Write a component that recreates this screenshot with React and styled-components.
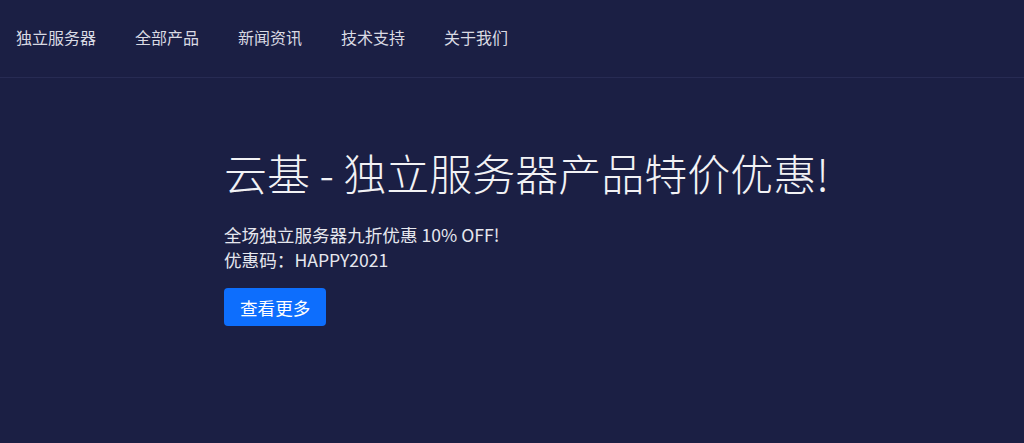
import styled, { createGlobalStyle } from 'styled-components';

const GlobalStyle = createGlobalStyle`
  html, body {
    margin: 0;
    padding: 0;
    background: #1b1f44;
  }
  body {
    font-family: "Noto Sans CJK SC", "Noto Sans", sans-serif;
  }
  * {
    box-sizing: border-box;
  }
`;

const navItems = ['独立服务器', '全部产品', '新闻资讯', '技术支持', '关于我们'];

export default function App() {
  return (
    <StPage>
      <GlobalStyle />
      <StHeader>
        <StNav>
          {navItems.map((item) => (
            <StNavLink key={item} href="#">
              {item}
            </StNavLink>
          ))}
        </StNav>
      </StHeader>
      <StHero>
        <StTitle>云基 - 独立服务器产品特价优惠!</StTitle>
        <StText>全场独立服务器九折优惠 10% OFF!</StText>
        <StText>优惠码：HAPPY2021</StText>
        <StButton type="button">查看更多</StButton>
      </StHero>
    </StPage>
  );
}

const StPage = styled.div`
  min-height: 443px;
  background: #1b1f44;
  color: #fff;
`;

const StHeader = styled.header`
  height: 78px;
  border-bottom: 1px solid #272b53;
  display: flex;
  align-items: center;
  padding: 0 16px 3px;
`;

const StNav = styled.nav`
  display: flex;
  align-items: center;
  gap: 39px;
`;

const StNavLink = styled.a`
  color: #d9dae3;
  font-size: 16px;
  line-height: 24px;
  text-decoration: none;
`;

const StHero = styled.section`
  display: flex;
  flex-direction: column;
  align-items: flex-start;
  padding: 68px 0 0 224px;
`;

const StTitle = styled.h1`
  margin: 0 0 24px;
  font-size: 43px;
  line-height: 52px;
  font-weight: 300;
  color: #f2f2f5;
  white-space: nowrap;
`;

const StText = styled.p`
  margin: 0;
  font-size: 17.6px;
  line-height: 25px;
  color: #e6e7ee;
`;

const StButton = styled.button`
  margin-top: 16px;
  height: 38px;
  padding: 0 16px;
  border: none;
  border-radius: 4px;
  background: #0d6efd;
  color: #fff;
  font-family: inherit;
  font-size: 17.6px;
  cursor: pointer;
`;
